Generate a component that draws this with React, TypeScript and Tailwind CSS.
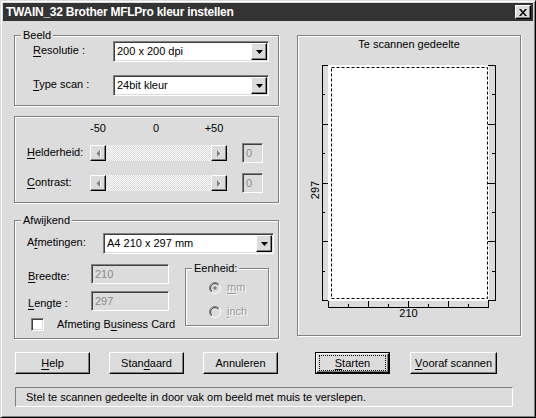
import React from "react"

const font = "font-['Liberation_Sans',Arial,sans-serif]"
const raised =
  "border border-t-white border-l-white border-r-black border-b-black shadow-[inset_-1px_-1px_0_#808080]"
const sunken =
  "border border-t-[#808080] border-l-[#808080] border-r-white border-b-white shadow-[inset_1px_1px_0_#404040,inset_-1px_-1px_0_#dcdcdc]"
const etched = "border border-[#808080] shadow-[inset_1px_1px_0_#fff,1px_1px_0_#fff]"

const U = ({ children }: { children: React.ReactNode }) => (
  <span className="underline underline-offset-[2px] decoration-1">{children}</span>
)

const Group = ({ label, className, children }: { label?: string; className?: string; children: React.ReactNode }) => (
  <div className={`relative ${etched} ${className ?? ""}`}>
    {label && (
      <span className="absolute -top-[7px] left-[6px] bg-[#dcdcdc] px-[2px] leading-[13px]">{label}</span>
    )}
    {children}
  </div>
)

const Combo = ({ value, className }: { value: string; className: string }) => (
  <div className={`flex h-[21px] bg-white ${sunken} ${className}`}>
    <div className="flex flex-1 items-center pl-[3px] text-black">{value}</div>
    <div className={`my-[1px] mr-[1px] flex w-[16px] items-center justify-center bg-[#dcdcdc] ${raised}`}>
      <svg width="7" height="4" viewBox="0 0 7 4">
        <path d="M0 0h7L3.5 4z" fill="#000" />
      </svg>
    </div>
  </div>
)

const Edit = ({ value, className }: { value: string; className: string }) => (
  <div className={`flex h-[20px] items-center bg-[#dcdcdc] pl-[3px] text-[#8a8a8a] ${sunken} ${className}`}>
    {value}
  </div>
)

const Arrow = ({ dir }: { dir: "l" | "r" }) => (
  <div className={`flex w-[16px] items-center justify-center bg-[#dcdcdc] ${raised}`}>
    <svg width="5" height="7" viewBox="0 0 5 7">
      {dir === "l" ? (
        <>
          <path d="M4 0v7L0.5 3.5z" transform="translate(1 0)" fill="#fff" />
          <path d="M4 0v7L0.5 3.5z" fill="#808080" />
        </>
      ) : (
        <>
          <path d="M0 0v7l3.5-3.5z" transform="translate(1 0)" fill="#fff" />
          <path d="M0 0v7l3.5-3.5z" fill="#808080" />
        </>
      )}
    </svg>
  </div>
)

const Slider = ({ label }: { label: React.ReactNode }) => (
  <div className="flex h-[20px] items-center">
    <div className="w-[63px] pl-[12px] box-content -mt-[2px]">{label}</div>
    <div className="flex h-[16px] w-[137px]">
      <Arrow dir="l" />
      <div className="flex-1 bg-[repeating-conic-gradient(#fff_0_25%,#d8d8d8_0_50%)] bg-[length:2px_2px]" />
      <Arrow dir="r" />
    </div>
    <Edit value="0" className="ml-[15px] w-[21px]" />
  </div>
)

const Radio = ({ id, checked }: { id: string; checked?: boolean }) => (
  <svg width="12" height="12" viewBox="0 0 12 12">
    <defs>
      <linearGradient id={`${id}a`} x1="0" y1="0" x2="1" y2="1">
        <stop offset="0.5" stopColor="#808080" />
        <stop offset="0.5" stopColor="#fff" />
      </linearGradient>
      <linearGradient id={`${id}b`} x1="0" y1="0" x2="1" y2="1">
        <stop offset="0.5" stopColor="#404040" />
        <stop offset="0.5" stopColor="#dcdcdc" />
      </linearGradient>
    </defs>
    <circle cx="6" cy="6" r="5.5" fill="#dcdcdc" stroke={`url(#${id}a)`} />
    <circle cx="6" cy="6" r="4.5" fill="none" stroke={`url(#${id}b)`} />
    {checked && <circle cx="6" cy="6" r="1.7" fill="#808080" />}
  </svg>
)

const Button = ({ children, className }: { children: React.ReactNode; className: string }) => (
  <div className={`flex h-[22px] items-center justify-center bg-[#dcdcdc] ${raised} ${className}`}>{children}</div>
)

const Preview = () => {
  const vt = Array.from({ length: 9 }, (_, i) => 5 + Math.round(i * 29.375))
  const ht = Array.from({ length: 9 }, (_, j) => 30 + j * 20)
  return (
    <svg width="222" height="262" viewBox="0 0 222 262" className="mt-[9px] block">
      <rect x="30" y="5" width="161" height="236" fill="#fff" />
      <rect x="33.5" y="7.5" width="156" height="231" fill="none" stroke="#000" strokeDasharray="3 2" />
      <g stroke="#000" strokeWidth="1" fill="none">
        <path d="M24.5 5v236M197.5 5v236" />
        {vt.map((y, i) => (
          <path key={`l${i}`} d={`M24 ${y + 0.5}h${i % 2 === 0 ? 6 : 3}`} />
        ))}
        {vt.map((y, i) => (
          <path key={`r${i}`} d={`M198 ${y + 0.5}h${i % 2 === 0 ? -8 : -4}`} />
        ))}
        <path d="M30 247.5h161" />
        {ht.map((x, j) => (
          <path key={`b${j}`} d={`M${x + 0.5} 248v${j % 2 === 0 ? -7 : -4}`} />
        ))}
      </g>
      <text x="110.5" y="257" textAnchor="middle" fontFamily="Liberation Sans, Arial, sans-serif" fontSize="11" fill="#000">
        210
      </text>
      <text
        x="0"
        y="0"
        transform="translate(21 130) rotate(-90)"
        textAnchor="middle"
        fontFamily="Liberation Sans, Arial, sans-serif"
        fontSize="11"
        fill="#000"
      >
        297
      </text>
    </svg>
  )
}

export default function App() {
  return (
    <div
      className={`${font} flex h-[418px] w-[536px] flex-col border border-t-[#dcdcdc] border-l-[#dcdcdc] border-r-black border-b-black bg-[#dcdcdc] p-[2px] text-[11px] leading-[13px] text-black shadow-[inset_1px_1px_0_#fff,inset_-1px_-1px_0_#808080]`}
    >
      <div className="flex h-[18px] items-center justify-between bg-[#333333] pl-[3px]">
        <span className="text-[12px] font-bold tracking-[-0.25px] text-white">
          TWAIN_32 Brother MFLPro kleur instellen
        </span>
        <div className={`mr-[2px] flex h-[14px] w-[16px] items-center justify-center bg-[#dcdcdc] ${raised}`}>
          <svg width="8" height="7" viewBox="0 0 8 7">
            <path d="M0 0h2l2 2.5L6 0h2L5 3.5 8 7H6L4 4.5 2 7H0l3-3.5z" fill="#000" />
          </svg>
        </div>
      </div>

      <div className="ml-[11px] mt-[14px] flex items-start">
        <div className="flex w-[265px] flex-col">
          <Group label="Beeld" className="h-[71px] pl-[18px] pt-[5px]">
            <div className="flex items-center">
              <div className="w-[80px] -mt-[3px]">
                <U>R</U>esolutie :
              </div>
              <Combo value="200 x 200 dpi" className="w-[156px]" />
            </div>
            <div className="mt-[13px] flex items-center">
              <div className="w-[80px] -mt-[3px]">
                <U>T</U>ype scan :
              </div>
              <Combo value="24bit kleur" className="w-[156px]" />
            </div>
          </Group>

          <Group className="mt-[10px] h-[87px] pt-[5px]">
            <div className="ml-[54px] flex">
              <div className="w-[58px] text-center">-50</div>
              <div className="w-[58px] text-center">0</div>
              <div className="w-[58px] text-center">+50</div>
            </div>
            <div className="mt-[8px]">
              <Slider
                label={
                  <>
                    <U>H</U>elderheid:
                  </>
                }
              />
            </div>
            <div className="mt-[10px]">
              <Slider
                label={
                  <>
                    <U>C</U>ontrast:
                  </>
                }
              />
            </div>
          </Group>

          <Group label="Afwijkend" className="mt-[17px] h-[119px] pt-[12px]">
            <div className="flex items-center">
              <div className="w-[76px] pl-[12px] box-content -mt-[2px]">
                A<U>f</U>metingen:
              </div>
              <Combo value="A4 210 x 297 mm" className="w-[171px]" />
            </div>
            <div className="flex">
              <div className="flex w-[170px] flex-col">
                <div className="mt-[10px] flex items-center">
                  <div className="w-[63px] pl-[13px] box-content mt-[4px]">
                    <U>B</U>reedte:
                  </div>
                  <Edit value="210" className="w-[78px]" />
                </div>
                <div className="mt-[7px] flex items-center">
                  <div className="w-[63px] pl-[13px] box-content mt-[4px]">
                    <U>L</U>engte :
                  </div>
                  <Edit value="297" className="w-[78px]" />
                </div>
                <div className="mt-[7px] flex items-center">
                  <div className={`ml-[16px] h-[13px] w-[13px] bg-white ${sunken}`} />
                  <span className="ml-[13px]">
                    Afmeting B<U>u</U>siness Card
                  </span>
                </div>
              </div>
              <Group label="Eenheid:" className="mt-[14px] h-[58px] w-[84px] pl-[23px] pt-[12px]">
                <div className="flex items-center">
                  <Radio id="rm" checked />
                  <span className="ml-[6px] text-[#9a9a9a] [text-shadow:1px_1px_0_#fff]">
                    <U>m</U>m
                  </span>
                </div>
                <div className="mt-[11px] flex items-center">
                  <Radio id="ri" />
                  <span className="ml-[6px] text-[#9a9a9a] [text-shadow:1px_1px_0_#fff]">
                    <U>i</U>nch
                  </span>
                </div>
              </Group>
            </div>
          </Group>
        </div>

        <Group className="ml-[18px] flex h-[301px] w-[224px] flex-col pt-[2px]">
          <div className="text-center">Te scannen gedeelte</div>
          <Preview />
        </Group>
      </div>

      <div className="ml-[12px] mt-[13px] flex">
        <Button className="w-[75px]">
          <U>H</U>elp
        </Button>
        <Button className="ml-[19px] w-[75px]">
          Stan<U>d</U>aard
        </Button>
        <Button className="ml-[19px] w-[75px]">Annuleren</Button>
        <div className="ml-[37px] h-[22px] w-[75px] border border-black">
          <div className={`flex h-full items-center justify-center bg-[#dcdcdc] ${raised}`}>
            <div className="flex h-[16px] w-[67px] items-center justify-center border border-dotted border-black">
              <U>S</U>tarten
            </div>
          </div>
        </div>
        <Button className="ml-[20px] w-[87px]">
          <U>V</U>ooraf scannen
        </Button>
      </div>

      <div className="ml-[12px] mt-[13px] flex h-[20px] w-[498px] items-center border border-t-[#808080] border-l-[#808080] border-r-white border-b-white pl-[10px]">
        Stel te scannen gedeelte in door vak om beeld met muis te verslepen.
      </div>
    </div>
  )
}
